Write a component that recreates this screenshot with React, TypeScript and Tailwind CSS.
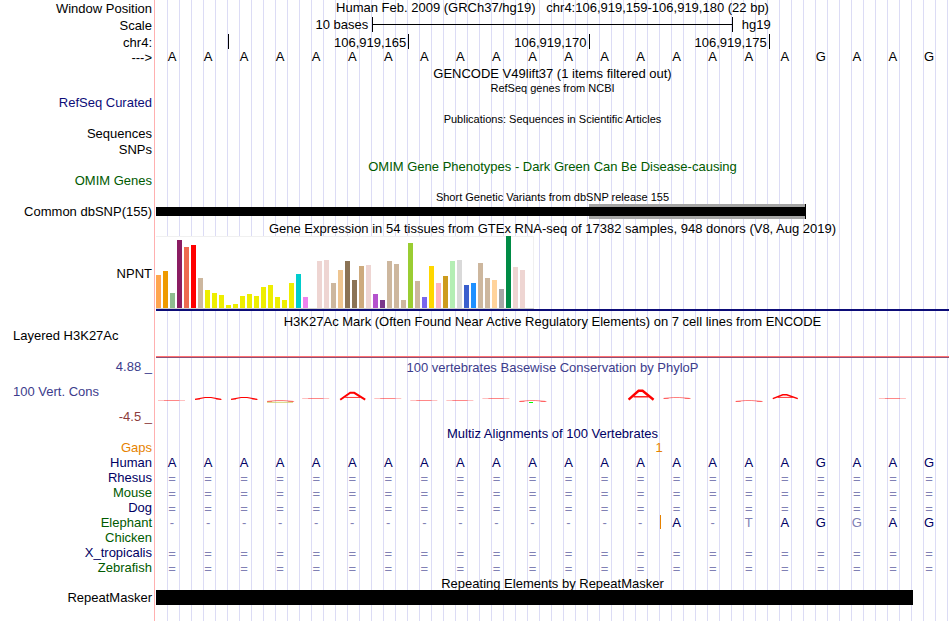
import type { ReactNode } from "react";

const SEQUENCE = "AAAAAAAAAAAAAAAAAAGAAG";
const ALIGNED = "=".repeat(22);

const NAVY = "text-[#000064]";
const GREEN = "text-[#005a00]";
const FAINT = "text-[#8080b4]";

const TISSUES: [string, number][] = [
  ["#ffa54f", 33], ["#ee9a00", 37], ["#8fbc8f", 15], ["#8b1c62", 68], ["#ee6a50", 61], ["#ff0000", 63],
  ["#cdb79e", 30], ["#eeee00", 18], ["#eeee00", 15], ["#eeee00", 13], ["#eeee00", 3], ["#eeee00", 4],
  ["#eeee00", 12], ["#eeee00", 14], ["#eeee00", 12], ["#eeee00", 21], ["#eeee00", 23], ["#eeee00", 11],
  ["#eeee00", 8], ["#eeee00", 25], ["#00cdcd", 34], ["#ee82ee", 11], ["#9ac0cd", 0], ["#eed5d2", 47],
  ["#eed5d2", 48], ["#cdb79e", 25], ["#eec591", 38], ["#8b7355", 47], ["#8b7355", 28], ["#cdaa7d", 42],
  ["#eed5d2", 43], ["#b452cd", 14], ["#7a378b", 8], ["#cdb79e", 47], ["#cdb79e", 44], ["#cdb79e", 8],
  ["#9acd32", 65], ["#cdb79e", 27], ["#7a67ee", 11], ["#ffd700", 42], ["#ffb6c1", 25], ["#cd9b1d", 32],
  ["#b4eeb4", 47], ["#d9d9d9", 48], ["#3a5fcd", 23], ["#1e90ff", 25], ["#cdb79e", 45], ["#cdb79e", 30],
  ["#ffd39b", 28], ["#a6a6a6", 19], ["#008b45", 72], ["#eed5d2", 41], ["#eed5d2", 38], ["#ff00ff", 0],
];

// Conservation marks: base index, baseline y and height of the peak.
const MARKS: [number, number, number][] = [
  [0, 13, 0], [1, 12, 2], [2, 12, 2], [3, 14, 1], [4, 11, 0], [5, 13, 8], [6, 11, 0], [7, 13, 0],
  [8, 13, 0], [9, 11, 0], [10, 14, 1], [13, 13, 10], [14, 11, 1], [16, 14, 1], [17, 12, 5], [20, 11, 0],
];

function Track({
  h = "h-[15px]",
  label,
  tone = "",
  align = "items-start",
  children,
}: {
  h?: string;
  label?: ReactNode;
  tone?: string;
  align?: string;
  children?: ReactNode;
}) {
  return (
    <div className={`flex ${h}`}>
      <div className={`flex w-[154px] shrink-0 justify-end pr-0.5 whitespace-nowrap ${align} ${tone}`}>{label}</div>
      <div className="min-w-0 flex-1 border-l border-[#ffb0b0] bg-[repeating-linear-gradient(to_right,transparent_0px,transparent_11px,#dcdcf5_11px,#dcdcf5_12px)] bg-origin-content bg-clip-content pl-px">
        {children}
      </div>
    </div>
  );
}

function Title({ tone = "", children }: { tone?: string; children: ReactNode }) {
  return <h2 className={`text-center whitespace-nowrap ${tone}`}>{children}</h2>;
}

function SmallTitle({ children }: { children: ReactNode }) {
  return <h2 className="text-center text-[11px] leading-[14px] whitespace-nowrap">{children}</h2>;
}

function Bases({ text, tone, faint = [], insertAt }: { text: string; tone: string; faint?: number[]; insertAt?: number }) {
  return (
    <div className={`grid grid-cols-22 text-center ${tone}`}>
      {text.split("").map((base, i) => (
        <span
          key={i}
          className={`h-[14px] pr-1 ${i + 1 === insertAt ? "border-r border-[#e68200]" : ""} ${
            base === "=" ? "leading-[17px]" : ""
          } ${base === "=" || base === "-" || faint.includes(i) ? FAINT : ""}`}
        >
          {base}
        </span>
      ))}
    </div>
  );
}

function Conservation() {
  return (
    <svg className="mt-3 block h-4 w-full" viewBox="0 0 793 16" preserveAspectRatio="none" fill="none" stroke="#ff0000">
      {MARKS.map(([i, y, rise]) => {
        const x = 16 + i * 36.045;
        if (rise === 0) {
          return (
            <g key={i}>
              <path d={`M${x - 14} ${y + 0.5}h27`} strokeWidth="0.25" />
              <path d={`M${x - 8} ${y + 0.5}h15`} strokeWidth="0.3" />
            </g>
          );
        }
        if (rise < 3) {
          return (
            <g key={i}>
              <path
                d={`M${x - 13} ${y + 0.4}L${x - 3} ${y + 0.5 - rise}H${x + 3}L${x + 13} ${y + 0.4}`}
                strokeWidth={rise === 2 ? 1.2 : 0.5}
              />
              <path d={`M${x - 13} ${y + 0.5}h5M${x + 8} ${y + 0.5}h6`} strokeWidth="0.4" />
            </g>
          );
        }
        return (
          <g key={i}>
            <path
              d={`M${x - 12} ${y - 0.3}L${x - 2} ${y - rise + 0.8}H${x + 2}L${x + 13} ${y - 0.3}`}
              strokeWidth={rise > 9 ? 2.4 : rise > 6 ? 2 : 1.4}
            />
            <path d={`M${x - 7} ${y - rise * 0.32}H${x + 8}`} strokeWidth={rise > 9 ? 1.3 : 0.8} />
          </g>
        );
      })}
      <path d="M111 15.3h26" stroke="#c8c850" strokeWidth="0.8" />
      <path d="M373 15.5h4" stroke="#00ff00" strokeWidth="1" />
    </svg>
  );
}

export default function App() {
  return (
    <main className="flex min-h-screen flex-col bg-white pr-px font-['Liberation_Sans',Arial,sans-serif] text-[13px] leading-[15px] text-black">
      <Track h="h-[17px]" label="Window Position" align="items-start leading-[17px]">
        <h1 className="text-center whitespace-pre">{"Human Feb. 2009 (GRCh37/hg19)   chr4:106,919,159-106,919,180 (22 bp)"}</h1>
      </Track>
      <Track h="h-4" label="Scale" align="items-start leading-[17px]">
        <div className="grid h-[15px] grid-cols-22">
          <span className="col-span-6 pr-1 text-right">10 bases</span>
          <span className="col-span-10 flex items-center border-x border-black">
            <span className="h-px w-full bg-black" />
          </span>
          <span className="col-span-6 pl-[9px]">hg19</span>
        </div>
      </Track>
      <Track h="h-4" label="chr4:" align="items-end leading-[13px]">
        <div className="grid grid-cols-22 pt-px text-right">
          <span className="col-span-2 h-[15px] border-r border-transparent" />
          <span className="col-span-5 h-[15px] border-l border-black pt-px pr-0.5">106,919,165</span>
          <span className="col-span-5 h-[15px] border-l border-black pt-px pr-0.5">106,919,170</span>
          <span className="col-span-5 h-[15px] border-l border-black pt-px pr-0.5">106,919,175</span>
          <span className="col-span-5 h-[15px] border-l border-black" />
        </div>
      </Track>
      <Track h="h-[17px]" label="--->" align="items-start leading-[17px]">
        <Bases text={SEQUENCE} tone="text-black" />
      </Track>
      <Track>
        <Title>GENCODE V49lift37 (1 items filtered out)</Title>
      </Track>
      <Track h="h-[14px]">
        <SmallTitle>RefSeq genes from NCBI</SmallTitle>
      </Track>
      <Track h="h-[17px]" label="RefSeq Curated" tone="text-[#0c0c78]" />
      <Track h="h-[14px]">
        <SmallTitle>Publications: Sequences in Scientific Articles</SmallTitle>
      </Track>
      <Track h="h-4" label="Sequences" />
      <Track h="h-[17px]" label="SNPs" />
      <Track h="h-[14px]">
        <Title tone={GREEN}>OMIM Gene Phenotypes - Dark Green Can Be Disease-causing</Title>
      </Track>
      <Track h="h-[17px]" label="OMIM Genes" tone={GREEN} />
      <Track h="h-[14px]">
        <SmallTitle>Short Genetic Variants from dbSNP release 155</SmallTitle>
      </Track>
      <Track label="Common dbSNP(155)">
        <div className="grid h-[15px] grid-cols-22 items-center">
          <div className="col-span-12 h-[9px] bg-black" />
          <div className="col-span-6 h-[15px] border-y-3 border-[#a5a5a5] bg-black" />
          <div className="col-span-4 h-[15px] border-l border-black" />
        </div>
      </Track>
      <Track h="h-[17px]">
        <div className="pt-0.5">
          <Title>Gene Expression in 54 tissues from GTEx RNA-seq of 17382 samples, 948 donors (V8, Aug 2019)</Title>
        </div>
      </Track>
      <Track h="h-[75px]" label="NPNT" align="items-center leading-[17px]">
        <div className="flex h-[73px] w-[378px] items-end gap-0.5 border-b border-[#cccccc] bg-white shadow-[inset_0_1px_#f0f0f0,inset_-1px_0_#f0f0f0]">
          {TISSUES.map(([color, height], i) => (
            <div key={i} className="w-[5px]" style={{ height, backgroundColor: color }} />
          ))}
        </div>
        <div className="h-0.5 bg-[#0c0c78]" />
      </Track>
      <Track h="h-[17px]">
        <div className="pt-[3px]">
          <Title>H3K27Ac Mark (Often Found Near Active Regulatory Elements) on 7 cell lines from ENCODE</Title>
        </div>
      </Track>
      <Track h="h-[31px]" label={<span className="w-[139px]">Layered H3K27Ac</span>}>
        <div className="pt-7">
          <div className="h-0.5 border-t border-[#ff7070] bg-[#8c5078]" />
        </div>
      </Track>
      <Track
        h="h-[65px]"
        label={
          <div className="flex h-full w-[139px] flex-col justify-between text-[#3c3c8c]">
            <span className="text-right">4.88 _</span>
            <span>100 Vert. Cons</span>
            <span className="text-right text-[#8c3c3c]">-4.5 _</span>
          </div>
        }
      >
        <div className="pt-px">
          <Title tone="text-[#3c3c8c]">100 vertebrates Basewise Conservation by PhyloP</Title>
        </div>
        <Conservation />
      </Track>
      <Track h="h-4">
        <div className="pt-0.5">
          <Title tone={NAVY}>Multiz Alignments of 100 Vertebrates</Title>
        </div>
      </Track>
      <Track label="Gaps" tone="text-[#e68200]">
        <div className="grid grid-cols-22 text-right text-[#e68200]">
          <span className="col-span-14 -mr-0.5">1</span>
        </div>
      </Track>
      <Track label="Human" tone={NAVY}>
        <Bases text={SEQUENCE} tone={NAVY} />
      </Track>
      <Track label="Rhesus" tone={NAVY}>
        <Bases text={ALIGNED} tone={FAINT} />
      </Track>
      <Track label="Mouse" tone={GREEN}>
        <Bases text={ALIGNED} tone={FAINT} />
      </Track>
      <Track label="Dog" tone={NAVY}>
        <Bases text={ALIGNED} tone={FAINT} />
      </Track>
      <Track label="Elephant" tone={GREEN}>
        <Bases text="--------------A-TAGGAG" tone={NAVY} faint={[16, 19]} insertAt={14} />
      </Track>
      <Track label="Chicken" tone={GREEN} />
      <Track label="X_tropicalis" tone={NAVY}>
        <Bases text={ALIGNED} tone={FAINT} />
      </Track>
      <Track label="Zebrafish" tone={GREEN}>
        <Bases text={ALIGNED} tone={FAINT} />
      </Track>
      <Track>
        <div className="pt-px">
          <Title>Repeating Elements by RepeatMasker</Title>
        </div>
      </Track>
      <Track label="RepeatMasker">
        <div className="grid grid-cols-22">
          <div className="col-span-21 h-[15px] bg-black" />
        </div>
      </Track>
      <Track h="min-h-4 flex-1" />
    </main>
  );
}
